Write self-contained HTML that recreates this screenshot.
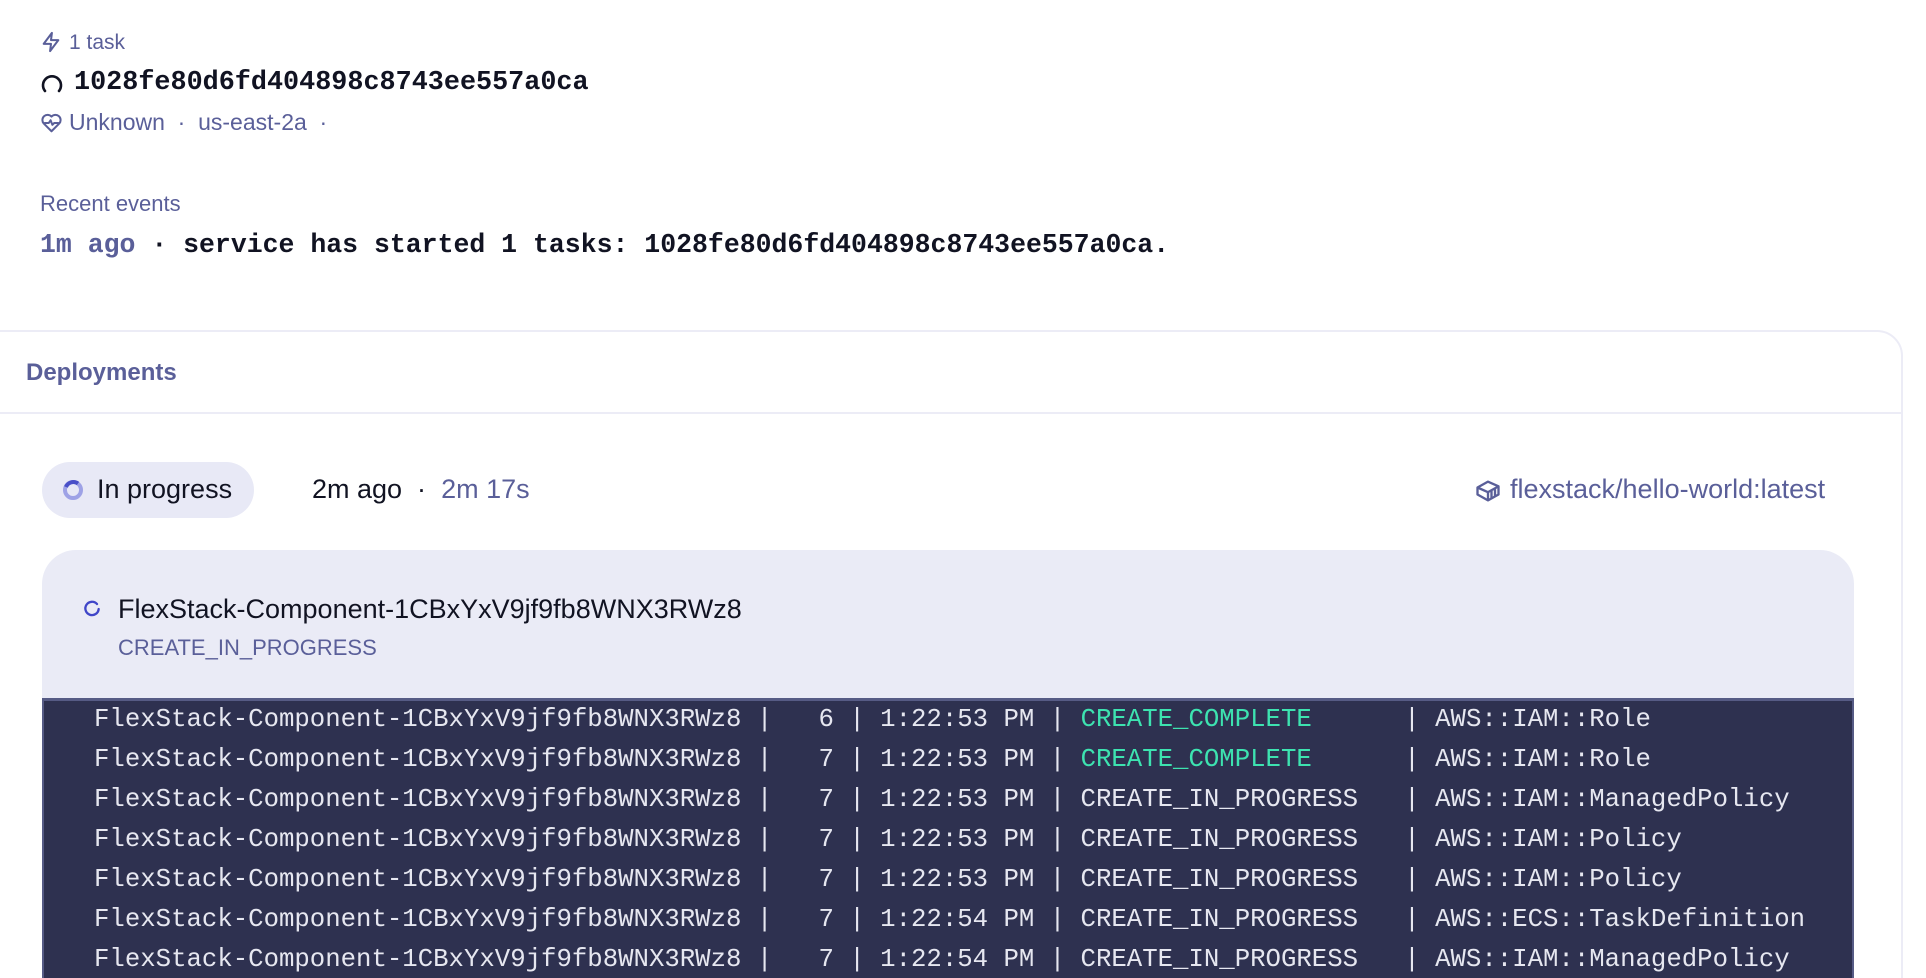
<!DOCTYPE html>
<html style="overflow:hidden;height:978px"><head><meta charset="utf-8"><style>
*{margin:0;padding:0;box-sizing:border-box}
body{width:1926px;height:978px;background:#fff;overflow:hidden;font-family:"Liberation Sans",sans-serif;color:#111322}
#w{position:relative;width:1926px;height:978px;overflow:hidden}
.a{position:absolute;white-space:pre;line-height:1}
.mut{color:#5a5f99}
.mono{font-family:"Liberation Mono",monospace}
.term{position:absolute;left:42px;top:698px;width:1812px;height:300px;background:#2e3150;border-left:2px solid #565b85;border-right:2px solid #565b85;border-top:3px solid #565b85}
.term div{position:absolute;left:50px;font-family:"Liberation Mono",monospace;font-size:25.7px;color:#e6e7f0;white-space:pre;line-height:1}
.g{color:#3de3b0}
</style></head><body><div id="w">
<svg class="a" style="left:40px;top:30px" width="22" height="24" viewBox="0 0 24 24" fill="none" stroke="#5a5f99" stroke-width="2.2" stroke-linejoin="round"><path d="M13 2 4 14h8l-1 8 9-12h-8z"/></svg>
<div class="a mut" style="left:69px;top:32px;font-size:21px">1 task</div>
<svg class="a" style="left:40px;top:71px" width="24" height="26" viewBox="0 0 24 24" fill="none" stroke="#111322" stroke-width="2.6" stroke-linecap="round"><path d="M5 19A9 9 0 1 1 19 19"/></svg>
<div class="a mono" style="left:74px;top:70px;font-size:26.8px;font-weight:bold">1028fe80d6fd404898c8743ee557a0ca</div>
<svg class="a" style="left:40px;top:112px" width="23" height="22" viewBox="0 0 24 24" fill="none" stroke="#5a5f99" stroke-width="2.2" stroke-linejoin="round"><path d="M12 21 3.5 12.5A5 5 0 0 1 12 5a5 5 0 0 1 8.5 7.5z"/><path d="M4 12h5l2-3 2 5 2-2h5"/></svg>
<div class="a mut" style="left:69px;top:111px;font-size:23px">Unknown  ·  us-east-2a  ·</div>
<div class="a mut" style="left:40px;top:193px;font-size:22px">Recent events</div>
<div class="a mono" style="left:40px;top:232px;font-size:26.5px;font-weight:bold"><span class="mut">1m ago</span> · service has started 1 tasks: 1028fe80d6fd404898c8743ee557a0ca.</div>

<div style="position:absolute;left:-30px;top:330px;width:1933px;height:700px;border:2px solid #ececf6;border-radius:26px"></div>
<div class="a" style="left:26px;top:361px;font-size:24px;font-weight:bold;color:#5a5f99">Deployments</div>
<div style="position:absolute;left:0;top:412px;width:1903px;height:2px;background:#ececf6"></div>

<div style="position:absolute;left:42px;top:462px;width:212px;height:56px;border-radius:28px;background:#e8e9f6"></div>
<svg class="a" style="left:61px;top:478px" width="24" height="24" viewBox="0 0 24 24" fill="none" stroke-width="4"><circle cx="12" cy="12" r="8" stroke="#9ea2e6"/><path d="M5 9A8 8 0 0 1 17 5.5" stroke="#4a50c8"/></svg>
<div class="a" style="left:97px;top:476px;font-size:27px">In progress</div>
<div class="a" style="left:312px;top:476px;font-size:27px">2m ago  ·  <span class="mut">2m 17s</span></div>
<svg class="a" style="left:1474px;top:477px" width="28" height="28" viewBox="0 0 24 24" fill="none" stroke="#5a5f99" stroke-width="2" stroke-linejoin="round"><path d="M3 9 12 4l9 4v7l-9 5-9-5z"/><path d="M3 9l9 4 9-5M12 13v7M15 12v6M18 10.5v6"/></svg>
<div class="a mut" style="left:1510px;top:476px;font-size:27px">flexstack/hello-world:latest</div>

<div style="position:absolute;left:42px;top:550px;width:1812px;height:160px;border-radius:34px 34px 0 0;background:#eaebf6"></div>
<svg class="a" style="left:82px;top:599px" width="20" height="20" viewBox="0 0 24 24" fill="none" stroke="#4046c8" stroke-width="2.8" stroke-linecap="round"><path d="M18 6A8 8 0 1 0 20 12"/></svg>
<div class="a" style="left:118px;top:596px;font-size:27px">FlexStack-Component-1CBxYxV9jf9fb8WNX3RWz8</div>
<div class="a mut" style="left:118px;top:637px;font-size:22px">CREATE_IN_PROGRESS</div>

<div class="term">
<div style="top:6px">FlexStack-Component-1CBxYxV9jf9fb8WNX3RWz8 |   6 | 1:22:53 PM | <span class="g">CREATE_COMPLETE</span>      | AWS::IAM::Role</div>
<div style="top:46px">FlexStack-Component-1CBxYxV9jf9fb8WNX3RWz8 |   7 | 1:22:53 PM | <span class="g">CREATE_COMPLETE</span>      | AWS::IAM::Role</div>
<div style="top:86px">FlexStack-Component-1CBxYxV9jf9fb8WNX3RWz8 |   7 | 1:22:53 PM | CREATE_IN_PROGRESS   | AWS::IAM::ManagedPolicy</div>
<div style="top:126px">FlexStack-Component-1CBxYxV9jf9fb8WNX3RWz8 |   7 | 1:22:53 PM | CREATE_IN_PROGRESS   | AWS::IAM::Policy</div>
<div style="top:166px">FlexStack-Component-1CBxYxV9jf9fb8WNX3RWz8 |   7 | 1:22:53 PM | CREATE_IN_PROGRESS   | AWS::IAM::Policy</div>
<div style="top:206px">FlexStack-Component-1CBxYxV9jf9fb8WNX3RWz8 |   7 | 1:22:54 PM | CREATE_IN_PROGRESS   | AWS::ECS::TaskDefinition</div>
<div style="top:246px">FlexStack-Component-1CBxYxV9jf9fb8WNX3RWz8 |   7 | 1:22:54 PM | CREATE_IN_PROGRESS   | AWS::IAM::ManagedPolicy</div>
</div>
</div></body></html>
